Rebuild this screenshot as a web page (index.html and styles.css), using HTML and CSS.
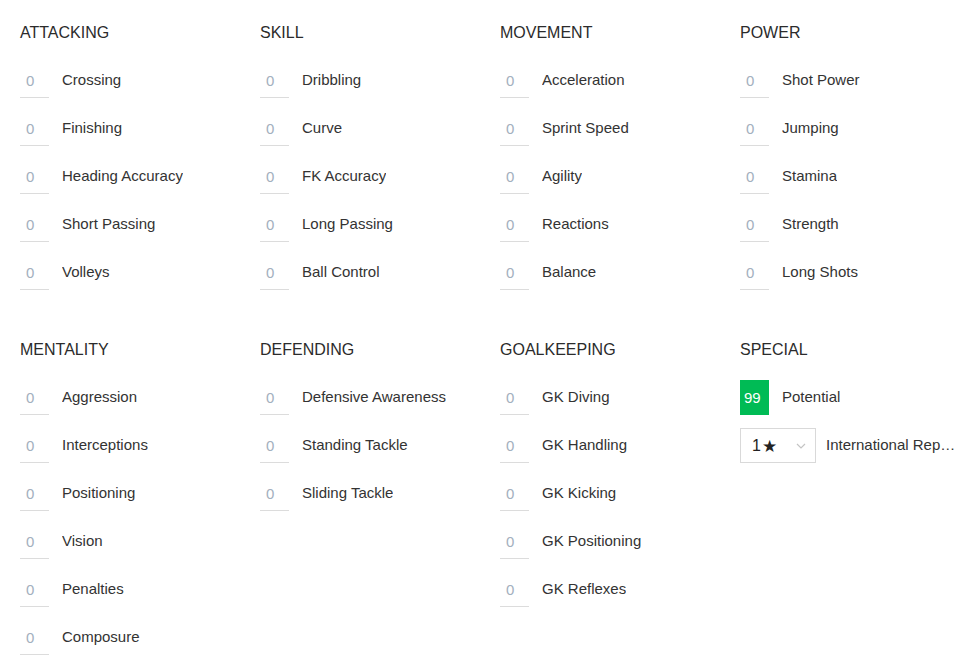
FILE: index.html
```html
<!DOCTYPE html>
<html>
<head>
<meta charset="utf-8">
<link rel="stylesheet" href="styles.css">
</head>
<body>
<div class="page">
  <section class="group">
    <h2 class="title">ATTACKING</h2>
    <div class="row"><span class="val">0</span><span class="label">Crossing</span></div>
    <div class="row"><span class="val">0</span><span class="label">Finishing</span></div>
    <div class="row"><span class="val">0</span><span class="label">Heading Accuracy</span></div>
    <div class="row"><span class="val">0</span><span class="label">Short Passing</span></div>
    <div class="row"><span class="val">0</span><span class="label">Volleys</span></div>
  </section>
  <section class="group">
    <h2 class="title">SKILL</h2>
    <div class="row"><span class="val">0</span><span class="label">Dribbling</span></div>
    <div class="row"><span class="val">0</span><span class="label">Curve</span></div>
    <div class="row"><span class="val">0</span><span class="label">FK Accuracy</span></div>
    <div class="row"><span class="val">0</span><span class="label">Long Passing</span></div>
    <div class="row"><span class="val">0</span><span class="label">Ball Control</span></div>
  </section>
  <section class="group">
    <h2 class="title">MOVEMENT</h2>
    <div class="row"><span class="val">0</span><span class="label">Acceleration</span></div>
    <div class="row"><span class="val">0</span><span class="label">Sprint Speed</span></div>
    <div class="row"><span class="val">0</span><span class="label">Agility</span></div>
    <div class="row"><span class="val">0</span><span class="label">Reactions</span></div>
    <div class="row"><span class="val">0</span><span class="label">Balance</span></div>
  </section>
  <section class="group">
    <h2 class="title">POWER</h2>
    <div class="row"><span class="val">0</span><span class="label">Shot Power</span></div>
    <div class="row"><span class="val">0</span><span class="label">Jumping</span></div>
    <div class="row"><span class="val">0</span><span class="label">Stamina</span></div>
    <div class="row"><span class="val">0</span><span class="label">Strength</span></div>
    <div class="row"><span class="val">0</span><span class="label">Long Shots</span></div>
  </section>
  <section class="group">
    <h2 class="title">MENTALITY</h2>
    <div class="row"><span class="val">0</span><span class="label">Aggression</span></div>
    <div class="row"><span class="val">0</span><span class="label">Interceptions</span></div>
    <div class="row"><span class="val">0</span><span class="label">Positioning</span></div>
    <div class="row"><span class="val">0</span><span class="label">Vision</span></div>
    <div class="row"><span class="val">0</span><span class="label">Penalties</span></div>
    <div class="row"><span class="val">0</span><span class="label">Composure</span></div>
  </section>
  <section class="group">
    <h2 class="title">DEFENDING</h2>
    <div class="row"><span class="val">0</span><span class="label">Defensive Awareness</span></div>
    <div class="row"><span class="val">0</span><span class="label">Standing Tackle</span></div>
    <div class="row"><span class="val">0</span><span class="label">Sliding Tackle</span></div>
  </section>
  <section class="group">
    <h2 class="title">GOALKEEPING</h2>
    <div class="row"><span class="val">0</span><span class="label">GK Diving</span></div>
    <div class="row"><span class="val">0</span><span class="label">GK Handling</span></div>
    <div class="row"><span class="val">0</span><span class="label">GK Kicking</span></div>
    <div class="row"><span class="val">0</span><span class="label">GK Positioning</span></div>
    <div class="row"><span class="val">0</span><span class="label">GK Reflexes</span></div>
  </section>
  <section class="group">
    <h2 class="title">SPECIAL</h2>
    <div class="row"><span class="val val-green">99</span><span class="label">Potential</span></div>
    <div class="row">
      <span class="select">1<span class="star">★</span>
        <svg class="chev" width="10" height="6" viewBox="0 0 10 6"><path d="M1 1l4 4 4-4" fill="none" stroke="#c4c4c4" stroke-width="1.2"/></svg>
      </span>
      <span class="label label-sel">International Reputation</span>
    </div>
  </section>
</div>
</body>
</html>
```

FILE: styles.css
```css
html, body {
  margin: 0;
  padding: 0;
  background: #fff;
  overflow: hidden;
}
body {
  font-family: "Liberation Sans", Arial, sans-serif;
  color: #333;
}
.page {
  width: 940px;
  padding: 20px;
  display: grid;
  grid-template-columns: repeat(4, 220px);
  column-gap: 20px;
  row-gap: 34px;
  align-items: start;
}
.group {
  min-width: 0;
}
.title {
  margin: 0 0 18px;
  padding-top: 1px;
  font-size: 16px;
  line-height: 24px;
  font-weight: normal;
  color: #2b2b2b;
}
.row {
  display: flex;
  align-items: center;
  height: 35px;
  margin-bottom: 13px;
}
.val {
  box-sizing: border-box;
  width: 29px;
  height: 35px;
  flex: none;
  padding-left: 6px;
  font-size: 15px;
  line-height: 35px;
  color: #a3b0be;
  border-bottom: 1px solid #dcdcdc;
}
.val-green {
  background: #00bb55;
  color: #fff;
  border-bottom: none;
  padding-left: 4px;
}
.label {
  margin-left: 13px;
  padding-bottom: 2px;
  font-size: 15px;
  color: #333;
  white-space: nowrap;
  overflow: hidden;
  text-overflow: ellipsis;
  min-width: 0;
}
.label-sel {
  margin-left: 10px;
}
.select {
  box-sizing: border-box;
  flex: none;
  width: 76px;
  height: 35px;
  border: 1px solid #d9d9d9;
  display: flex;
  align-items: center;
  padding-left: 11px;
  font-size: 16px;
  color: #222;
}
.star {
  margin-left: 1px;
  font-family: "DejaVu Sans", sans-serif;
  font-size: 17px;
}
.chev {
  margin-left: auto;
  margin-right: 9px;
}
```
